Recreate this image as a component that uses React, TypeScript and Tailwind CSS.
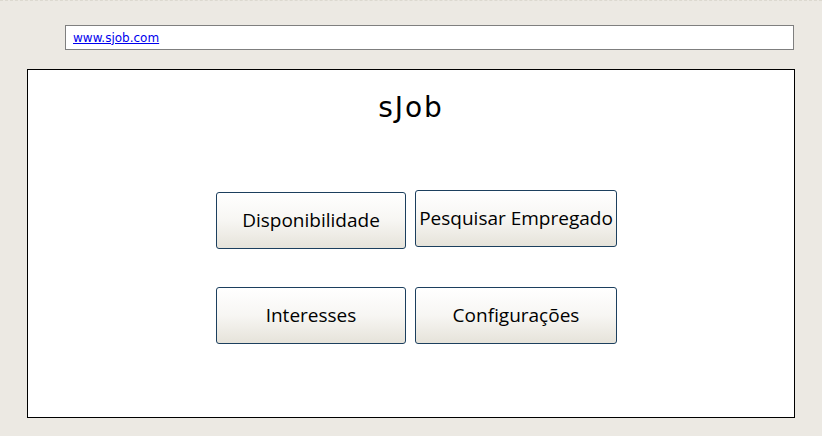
const btn =
  'flex items-center justify-center rounded-[3px] border border-[#1c3f5e] bg-gradient-to-b from-white via-[#f7f6f3] to-[#e6e3da] text-[19px] text-black';

export default function App() {
  return (
    <div className="h-[436px] w-[822px] overflow-hidden border-t border-dashed border-[#dcd9d0] bg-[#ece9e3] pt-[24px] font-['Open_Sans',sans-serif]">
      <div className="ml-[65px] flex h-[25px] w-[729px] items-center border border-[#7f7f7f] bg-white px-[7px]">
        <a href="#" className="font-['DejaVu_Sans',sans-serif] text-[12px] text-[#0000ee] underline">
          www.sjob.com
        </a>
      </div>

      <div className="ml-[27px] mt-[19px] h-[349px] w-[768px] border border-black bg-white">
        <h1 className="mt-[20px] text-center font-['DejaVu_Sans',sans-serif] text-[28px] leading-[36px] tracking-[2px] text-black">
          sJob
        </h1>

        <div className="ml-[188px] mt-[64px] grid w-[401px] grid-cols-[190px_202px] gap-x-[9px] gap-y-[38px]">
          <button type="button" className={`${btn} mt-[2px] h-[57px]`}>
            Disponibilidade
          </button>
          <button type="button" className={`${btn} h-[57px]`}>
            Pesquisar Empregado
          </button>
          <button type="button" className={`${btn} h-[57px]`}>
            Interesses
          </button>
          <button type="button" className={`${btn} h-[57px]`}>
            Configurações
          </button>
        </div>
      </div>
    </div>
  );
}
